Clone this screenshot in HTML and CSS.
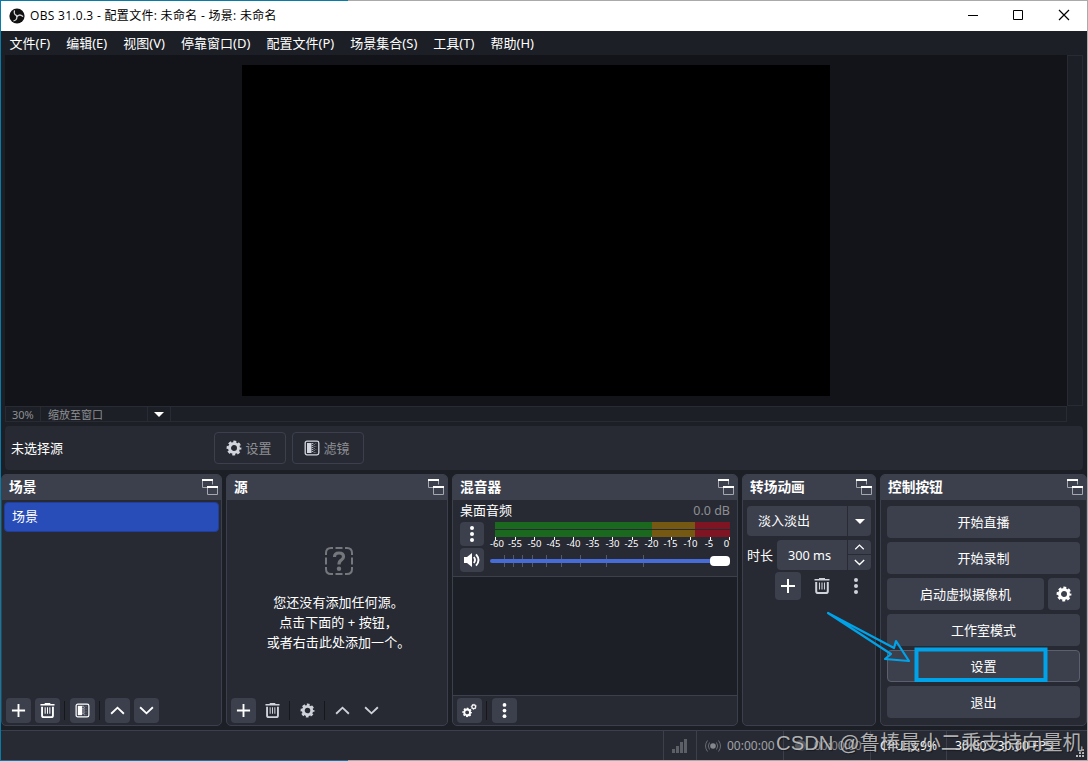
FILE: index.html
```html
<!DOCTYPE html>
<html lang="zh-CN">
<head>
    <meta charset="UTF-8">
    <title>OBS 31.0.3</title>
    <link rel="stylesheet" href="styles.css">
</head>
<body>
    <!-- shared icons -->
    <svg class="sprite">
        <symbol id="plus" viewBox="0 0 16 16"><path d="M8 1v14M1 8h14" fill="none" stroke="currentColor" stroke-width="2"/></symbol>
        <symbol id="trash" viewBox="0 0 16 16"><path d="M.5 1.8h15M5 .7h6" fill="none" stroke="currentColor" stroke-width="1.6"/><path d="M2.2 4v9.2q0 1.8 1.8 1.8h8q1.8 0 1.8-1.8V4" fill="none" stroke="currentColor" stroke-width="2"/><path d="M5.5 4.500v7M8 4.500v7M10.500 4.500v7" stroke="currentColor" stroke-width="1.1"/></symbol>
        <symbol id="filter" viewBox="0 0 16 16"><rect x="1.200" y="1.200" width="13.600" height="13.600" rx="1.800" fill="none" stroke="currentColor" stroke-width="1.300"/><path d="M3 3h4.500v10H3z" fill="currentColor"/><path d="M8.500 3v10" stroke="currentColor" stroke-width="1.500" stroke-dasharray="1 1" opacity=".8"/><path d="M10.200 4v9" stroke="currentColor" stroke-dasharray="1 1" opacity=".6"/><path d="M11.800 3v10" stroke="currentColor" stroke-dasharray="1 2" opacity=".35"/></symbol>
        <symbol id="up" viewBox="0 0 16 16"><path d="M1.200 11.500 8 5l6.800 6.500" fill="none" stroke="currentColor" stroke-width="2"/></symbol>
        <symbol id="down" viewBox="0 0 16 16"><path d="M1.200 4.500 8 11l6.800-6.500" fill="none" stroke="currentColor" stroke-width="2"/></symbol>
        <symbol id="gear" viewBox="0 0 16 16"><circle cx="8" cy="8" r="4.500" fill="none" stroke="currentColor" stroke-width="3"/><circle cx="8" cy="8" r="6.300" fill="none" stroke="currentColor" stroke-width="2.200" stroke-dasharray="2.900 2.050" stroke-dashoffset="1.450"/></symbol>
        <symbol id="gears" viewBox="0 0 16 16"><use href="#gear" x="0" y="4.500" width="11" height="11"/><use href="#gear" x="9" y=".500" width="7" height="7"/></symbol>
        <symbol id="dots" viewBox="0 0 16 16"><circle cx="8" cy="2" r="2" fill="currentColor"/><circle cx="8" cy="8" r="2" fill="currentColor"/><circle cx="8" cy="14" r="2" fill="currentColor"/></symbol>
        <symbol id="float" viewBox="0 0 16 16"><path d="M5 8.500H.500V1h10v4.500" fill="none" stroke="#a5a7ae"/><path d="M0 1h11" stroke="#fff" stroke-width="2"/><path d="M5.500 8v7.500h10V8" fill="none" stroke="#a5a7ae"/><path d="M5 8h11" stroke="#fff" stroke-width="2"/></symbol>
        <symbol id="speaker" viewBox="0 0 16 16"><path d="M0 5h3l5-4v14l-5-4H0z" fill="currentColor"/><path d="M9.800 5q2.400 3 0 6M12 2.300q5 5.700 0 11.400" fill="none" stroke="currentColor" stroke-width="1.900"/></symbol>
    </svg>

    <div class="window">
        <div class="titlebar">
            <svg class="logo" viewBox="0 0 16 16"><circle cx="8" cy="8" r="7.600" fill="#111"/><g fill="none" stroke="#d4d4d4" stroke-width="1.300" stroke-linecap="round"><path id="blade" d="M8 7.600Q4.600 6.800 5.400 3"/><use href="#blade" transform="rotate(120 8 8)"/><use href="#blade" transform="rotate(240 8 8)"/></g></svg>
            <span class="title">OBS 31.0.3 - 配置文件: 未命名 - 场景: 未命名</span>
            <svg class="winbuttons" width="104" height="12" viewBox="0 0 104 12"><path d="M0 6.500h10M45.500 1.500h9v9h-9z" fill="none" stroke="#000"/><path d="m91 1 10 10M101 1 91 11" stroke="#000" stroke-width="1.200"/></svg>
        </div>
        <div class="menubar">
            <span>文件(F)</span><span>编辑(E)</span><span>视图(V)</span><span>停靠窗口(D)</span><span>配置文件(P)</span><span>场景集合(S)</span><span>工具(T)</span><span>帮助(H)</span>
        </div>

        <div class="preview-row">
            <div class="preview"><div class="canvas"></div></div>
            <div class="vscroll"></div>
        </div>
        <div class="zoombar">
            <span class="percent">30%</span>
            <span class="scale">缩放至窗口</span>
            <span class="drop"><i class="caret"></i></span>
        </div>

        <div class="contextbar">
            <span class="nosource">未选择源</span>
            <button class="ghost"><svg><use href="#gear"/></svg>设置</button>
            <button class="ghost"><svg><use href="#filter"/></svg>滤镜</button>
        </div>

        <div class="docks">
            <div class="dock scenes">
                <div class="dock-title">场景<svg><use href="#float"/></svg></div>
                <div class="dock-body"><div class="scene">场景</div></div>
                <div class="toolbar">
                    <button class="tool"><svg><use href="#plus"/></svg></button>
                    <button class="tool"><svg><use href="#trash"/></svg></button>
                    <i class="sep"></i>
                    <button class="tool"><svg><use href="#filter"/></svg></button>
                    <i class="sep"></i>
                    <button class="tool"><svg><use href="#up"/></svg></button>
                    <button class="tool"><svg><use href="#down"/></svg></button>
                </div>
            </div>

            <div class="dock sources">
                <div class="dock-title">源<svg><use href="#float"/></svg></div>
                <div class="dock-body empty">
                    <svg class="question" viewBox="0 0 28 28"><g fill="none" stroke="#75777d" stroke-width="2"><path d="M1 8V6q0-5 5-5h2M20 1h2q5 0 5 5v2M27 20v2q0 5-5 5h-2M8 27H6q-5 0-5-5v-2M10.500 1h7M10.500 27h7M1 10.500v7M27 10.500v7"/><path d="M9.500 10q0-4 4.500-4 4.500 0 4.500 3.700 0 2-2.300 3.500Q14 14.500 14 17.500" stroke-width="3.200"/></g><circle cx="14" cy="21.800" r="2.200" fill="#75777d"/></svg>
                    <p>您还没有添加任何源。</p>
                    <p>点击下面的 + 按钮，</p>
                    <p>或者右击此处添加一个。</p>
                </div>
                <div class="toolbar">
                    <button class="tool"><svg><use href="#plus"/></svg></button>
                    <button class="tool off"><svg><use href="#trash"/></svg></button>
                    <i class="sep"></i>
                    <button class="tool off"><svg><use href="#gear"/></svg></button>
                    <i class="sep"></i>
                    <button class="tool off"><svg><use href="#up"/></svg></button>
                    <button class="tool off"><svg><use href="#down"/></svg></button>
                </div>
            </div>

            <div class="dock mixer">
                <div class="dock-title">混音器<svg><use href="#float"/></svg></div>
                <div class="channel">
                    <div class="channel-name"><span>桌面音频</span><span class="db">0.0 dB</span></div>
                    <div class="channel-main">
                        <div class="channel-buttons">
                            <button class="tool"><svg><use href="#dots"/></svg></button>
                            <button class="tool"><svg><use href="#speaker"/></svg></button>
                        </div>
                        <svg class="meter" width="246" height="50" viewBox="0 0 246 50">
                            <path d="M7 0h157v7H7zM7 8h157v7H7z" fill="#1b691f"/>
                            <path d="M164 0h43v7h-43zM164 8h43v7h-43z" fill="#755812"/>
                            <path d="M207 0h35v7h-35zM207 8h35v7h-35z" fill="#7f1423"/>
                            <path d="M7.500 15v3M27.500 15v3M46.500 15v3M66.500 15v3M85.500 15v3M105.500 15v3M124.500 15v3M144.500 15v3M163.500 15v3M183.500 15v3M202.500 15v3M222.500 15v3M241.500 15v3" stroke="#fff"/>
                            <g class="scale-text">
                                <text x="9" y="25">-60</text><text x="27" y="25">-55</text><text x="46.500" y="25">-50</text><text x="65.500" y="25">-45</text><text x="85.500" y="25">-40</text><text x="104.500" y="25">-35</text><text x="124.500" y="25">-30</text><text x="143.500" y="25">-25</text><text x="163.500" y="25">-20</text><text x="182.500" y="25">-15</text><text x="202.500" y="25">-10</text><text x="221" y="25">-5</text><text x="238.500" y="25">0</text>
                            </g>
                            <path d="M16.500 33v12M25.500 33v12M34.500 33v12M44.500 33v12M58.500 33v12M73.500 33v12M92.500 33v12M118.500 33v12M155.500 33v12" stroke="#555967"/>
                            <rect x="2" y="37" width="232" height="4" rx="2" fill="#476bd7"/>
                            <rect x="222" y="34" width="20" height="10" rx="4" fill="#fff"/>
                        </svg>
                    </div>
                </div>
                <div class="mixer-empty"></div>
                <div class="toolbar">
                    <button class="tool"><svg><use href="#gears"/></svg></button>
                    <i class="sep"></i>
                    <button class="tool"><svg><use href="#dots"/></svg></button>
                </div>
            </div>

            <div class="dock transitions">
                <div class="dock-title">转场动画<svg><use href="#float"/></svg></div>
                <div class="transition-body">
                    <div class="combo"><span>淡入淡出</span><b><i class="caret"></i></b></div>
                    <div class="duration">
                        <label>时长</label>
                        <div class="spin"><span>300 ms</span><div class="steps"><svg><use href="#up"/></svg><svg><use href="#down"/></svg></div></div>
                    </div>
                    <div class="transition-tools">
                        <button class="tool"><svg><use href="#plus"/></svg></button>
                        <button class="tool off"><svg><use href="#trash"/></svg></button>
                        <button class="tool off"><svg><use href="#dots"/></svg></button>
                    </div>
                </div>
            </div>

            <div class="dock controls">
                <div class="dock-title">控制按钮<svg><use href="#float"/></svg></div>
                <div class="control-list">
                    <button>开始直播</button>
                    <button>开始录制</button>
                    <div class="camera"><button>启动虚拟摄像机</button><button class="camera-gear"><svg><use href="#gear"/></svg></button></div>
                    <button>工作室模式</button>
                    <button class="focus">设置</button>
                    <button>退出</button>
                </div>
            </div>
        </div>

        <div class="statusbar">
            <div class="cell signal"><svg width="15" height="14" viewBox="0 0 15 14"><path d="M0 10h3v4H0zM4 7h3v7H4zM8 3h3v11H8zM12 0h3v14h-3z" fill="#5d5f67"/></svg></div>
            <div class="cell stream"><svg width="16" height="12" viewBox="0 0 16 12"><circle cx="8" cy="6" r="2.800" fill="#85878d"/><path d="M4.500 2.500q-2.500 3.500 0 7M11.500 2.500q2.500 3.500 0 7M2.500 .500q-4 5.500 0 11M13.500 .500q4 5.500 0 11" fill="none" stroke="#6a6c74"/></svg>00:00:00</div>
            <div class="cell record"><i class="rec"></i>00:00:00</div>
            <div class="cell cpu">CPU: 3.9%</div>
            <div class="cell fps">30.00 / 30.00 FPS</div>
            <svg class="grip" width="8" height="8" viewBox="0 0 8 8"><path d="M6 0h2v2H6zM3 3h2v2H3zM6 3h2v2H6zM0 6h2v2H0zM3 6h2v2H3zM6 6h2v2H6z" fill="#bbb"/></svg>
        </div>
    </div>

    <!-- annotation arrow and frame -->
    <svg class="annotation" width="230" height="80" viewBox="820 605 230 80">
        <path d="m828 613 66 35 2-7 13 20-24-2 6-5z" fill="none" stroke="#00a2e8" stroke-width="2.200" stroke-linejoin="round"/>
        <rect x="916.500" y="649.500" width="129" height="30.500" fill="none" stroke="#00a2e8" stroke-width="4"/>
    </svg>
    <div class="watermark">CSDN @鲁棒最小二乘支持向量机</div>
</body>
</html>
```
FILE: styles.css
```css
* {
    box-sizing: border-box;
}
body {
    margin: 0;
    width: 1088px;
    height: 761px;
    overflow: hidden;
    position: relative;
    font-family: "Noto Sans", "Noto Sans CJK SC", sans-serif;
    font-size: 13px;
    color: #fff;
}
button {
    font: inherit;
    color: inherit;
    border: 0;
    padding: 0;
    background: #3c404d;
    border-radius: 4px;
    display: flex;
    align-items: center;
    justify-content: center;
}
svg {
    width: 16px;
    height: 16px;
    flex: none;
}
.sprite {
    display: none;
}
.window {
    height: 761px;
    display: flex;
    flex-direction: column;
    background: #1d1f26;
    border: 1px solid #aaa;
    border-left-color: #087ca9;
    border-image: linear-gradient(90deg, #087ca9 32%, #aaa 32%) 1;
}

/* title and menu */
.titlebar {
    height: 30px;
    flex: none;
    display: flex;
    align-items: center;
    background: #fff;
    color: #000;
    padding: 0 15px 0 8px;
    font-family: "Open Sans", "Noto Sans CJK SC", sans-serif;
    font-size: 12px;
}
.logo {
    margin-right: 5px;
}
.title {
    line-height: 16px;
    letter-spacing: 0.3px;
    white-space: nowrap;
}
.winbuttons {
    width: 104px;
    height: 12px;
    margin-left: auto;
    margin-top: -2px;
}
.menubar {
    height: 24px;
    flex: none;
    display: flex;
    gap: 16px;
    padding-left: 8.500px;
    line-height: 25px;
    letter-spacing: 0.020px;
    white-space: nowrap;
}

/* preview */
.preview-row {
    height: 351px;
    flex: none;
    display: flex;
    padding: 0 4px;
}
.preview {
    width: 1062px;
    background: #131419;
    padding: 10px 0 0 237px;
}
.canvas {
    width: 588px;
    height: 331px;
    background: #000;
}
.vscroll {
    width: 16px;
    border: 1px solid #292b34;
}
.zoombar {
    width: 1062px;
    height: 16px;
    flex: none;
    margin-left: 4px;
    display: flex;
    border: 1px solid #292b34;
    color: #8e8f92;
    font-size: 11px;
    line-height: 16px;
}
.zoombar span {
    border-right: 1px solid #292b34;
}
.percent {
    width: 35px;
    padding-left: 6px;
}
.scale {
    width: 107px;
    padding-left: 7px;
}
.drop {
    width: 23px;
    display: flex;
    align-items: center;
    justify-content: center;
}
.caret {
    border: 5px solid transparent;
    border-top-color: #fff;
    border-bottom: 0;
}
.contextbar {
    height: 44px;
    flex: none;
    margin: 4px 4px;
    display: flex;
    align-items: center;
    gap: 6px;
    padding-left: 6px;
    background: #272a33;
    border-radius: 4px;
}
.nosource {
    width: 197px;
    padding-bottom: 2px;
}
.ghost {
    width: 72px;
    height: 32px;
    gap: 3px;
    padding: 0 2px 2px 0;
    background: none;
    border: 1px solid #3c404d;
    color: #8e8f93;
}
.ghost svg {
    margin-top: 2px;
    color: #d3d5dd;
}

/* docks */
.docks {
    height: 252px;
    flex: none;
    display: flex;
    gap: 4px;
}
.dock {
    display: flex;
    flex-direction: column;
    background: #272a33;
    border: 1px solid #3c404d;
    border-radius: 5px;
}
.scenes { width: 221px; }
.sources { width: 222px; }
.mixer { width: 286px; }
.transitions { width: 134px; }
.controls { width: 207px; }
.dock-title {
    height: 25px;
    flex: none;
    display: flex;
    justify-content: space-between;
    align-items: center;
    padding: 0 3px 2px 7px;
    background: #3c404d;
    font-size: 13.700px;
    font-weight: bold;
    line-height: 20px;
    border-radius: 4px 4px 0 0;
}
.dock-title svg {
    margin-top: 1px;
}
.dock-body {
    flex: 1;
}
.scene {
    height: 30px;
    margin: 2px 2px 0;
    padding-left: 7px;
    line-height: 27px;
    background: #284cb8;
    border: 1px solid #213f99;
    border-radius: 4px;
}
.toolbar {
    height: 29px;
    display: flex;
    align-items: center;
    gap: 4px;
    padding: 0 4px 1px;
}
.tool {
    width: 25px;
    height: 25px;
}
.toolbar .tool svg {
    width: 15px;
    height: 15px;
}
.tool.off {
    background: none;
    color: #d0d2da;
}
.sep {
    width: 1px;
    height: 19px;
    margin-right: 1px;
    background: #15171c;
}
.empty {
    padding: 47px 0 0 3px;
    text-align: center;
}
.question {
    display: block;
    width: 28px;
    height: 28px;
    margin: 0 auto 17px;
}
.empty p {
    margin: 0;
    line-height: 20px;
    letter-spacing: 0.050px;
}

/* audio mixer */
.channel {
    height: 77px;
    flex: none;
    padding: 3px 0 0 7px;
    border-bottom: 1px solid #3c404d;
}
.channel-name {
    height: 19px;
    display: flex;
    justify-content: space-between;
    padding-right: 7px;
    line-height: 15px;
}
.db {
    font-size: 12.500px;
    line-height: 16px;
    color: #8e8f93;
}
.channel-main {
    display: flex;
    gap: 4px;
}
.channel-buttons {
    display: flex;
    flex-direction: column;
    gap: 2px;
}
.channel-buttons .tool {
    width: 24px;
    height: 24px;
}
.meter {
    width: 246px;
    height: 50px;
}
.scale-text {
    font-size: 9.500px;
    fill: #fff;
    text-anchor: middle;
}
.mixer-empty {
    flex: 1;
    background: #1d1f26;
    border-bottom: 1px solid #3c404d;
}

/* transitions */
.transition-body {
    padding: 6px 4px;
}
.combo, .spin {
    height: 30px;
    display: flex;
    background: #3c404d;
    border-radius: 4px;
}
.combo span {
    width: 101px;
    padding-left: 11px;
    line-height: 28px;
    border-right: 1px solid #292b34;
}
.combo b {
    flex: 1;
    display: flex;
    align-items: center;
    justify-content: center;
}
.duration {
    display: flex;
    align-items: center;
    margin-top: 4px;
}
.duration label {
    width: 30px;
    padding-bottom: 2px;
}
.spin {
    width: 94px;
    line-height: 30px;
}
.spin span {
    width: 71px;
    padding-left: 11px;
    font-size: 12.700px;
    border-right: 1px solid #292b34;
}
.steps {
    flex: 1;
}
.steps svg {
    display: block;
    width: 23px;
    height: 15px;
    padding: 2px 5px;
}
.steps svg:first-child {
    border-bottom: 1px solid #292b34;
}
.transition-tools {
    display: flex;
    align-items: center;
    gap: 8px;
    padding: 2px 0 0 28px;
}
.transition-tools .tool {
    width: 26px;
    height: 28px;
}

/* controls */
.control-list {
    display: flex;
    flex-direction: column;
    gap: 4px;
    padding: 6px;
}
.control-list button {
    height: 32px;
    width: 193px;
    padding-bottom: 2px;
}
.camera {
    display: flex;
    gap: 4px;
}
.camera button {
    width: 157px;
}
.camera .camera-gear {
    width: 32px;
    padding: 0;
}
.control-list .focus {
    border: 1px solid #5b5f6e;
}

/* status bar */
.statusbar {
    height: 30px;
    flex: none;
    margin-top: 4px;
    display: flex;
    justify-content: flex-end;
    background: #272a33;
    border-top: 1px solid #3c404d;
    font-size: 12px;
    position: relative;
}
.cell {
    display: flex;
    align-items: center;
    border-left: 1px solid #3c404d;
    white-space: nowrap;
}
.signal {
    width: 33px;
    padding-left: 8px;
}
.signal svg {
    width: 15px;
    height: 14px;
}
.stream {
    width: 87px;
    padding-left: 8px;
    gap: 6px;
    color: #a0a1a6;
}
.stream svg {
    height: 12px;
}
.record {
    width: 87px;
    padding-left: 11px;
    gap: 8px;
    color: #8e8f93;
}
.rec {
    width: 11px;
    height: 11px;
    border-radius: 50%;
    background: #55575f;
}
.cpu {
    width: 76px;
    padding-left: 9px;
}
.fps {
    width: 141px;
    padding-left: 8px;
    letter-spacing: 0.150px;
}
.grip {
    position: absolute;
    right: 3px;
    bottom: 3px;
    width: 8px;
    height: 8px;
}

.annotation {
    position: absolute;
    left: 820px;
    top: 605px;
    width: 230px;
    height: 80px;
}
.watermark {
    position: absolute;
    left: 776px;
    top: 729px;
    font-family: "Liberation Sans", "Noto Sans CJK SC", sans-serif;
    font-size: 20.300px;
    line-height: 28px;
    white-space: nowrap;
    color: rgba(215, 215, 215, 0.8);
    text-shadow: 1px 1px 1px rgba(0, 0, 0, 0.4);
}
```
